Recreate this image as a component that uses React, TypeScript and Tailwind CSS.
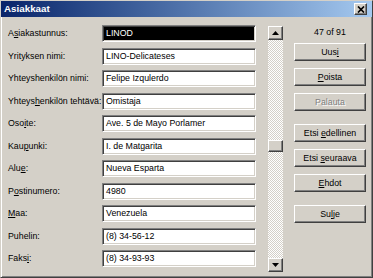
const FONT = "font-['Liberation_Sans',Arial,sans-serif]";

const fields = [
  { label: "Asiakastunnus:", u: 1, value: "LINOD", selected: true },
  { label: "Yrityksen nimi:", u: -1, value: "LINO-Delicateses" },
  { label: "Yhteyshenkilön nimi:", u: -1, value: "Felipe Izqulerdo" },
  { label: "Yhteyshenkilön tehtävä:", u: 6, value: "Omistaja" },
  { label: "Osoite:", u: 3, value: "Ave. 5 de Mayo Porlamer" },
  { label: "Kaupunki:", u: 3, value: "I. de Matgarita" },
  { label: "Alue:", u: 3, value: "Nueva Esparta" },
  { label: "Postinumero:", u: 1, value: "4980" },
  { label: "Maa:", u: 0, value: "Venezuela" },
  { label: "Puhelin:", u: -1, value: "(8) 34-56-12" },
  { label: "Faksi:", u: 4, value: "(8) 34-93-93" },
];

const buttons = [
  { text: "Uusi", u: 3, gap: "mt-[5px]" },
  { text: "Poista", u: 0, gap: "mt-[7px]" },
  { text: "Palauta", u: -1, gap: "mt-[7px]", disabled: true },
  { text: "Etsi edellinen", u: 5, gap: "mt-[13px]" },
  { text: "Etsi seuraava", u: 5, gap: "mt-[7px]" },
  { text: "Ehdot", u: 0, gap: "mt-[7px]" },
  { text: "Sulje", u: 2, gap: "mt-[13px]" },
];

// underline the access-key letter
function Acc({ text, u }: { text: string; u: number }) {
  if (u < 0) return <span>{text}</span>;
  return (
    <span className="whitespace-pre">
      {text.slice(0, u)}
      <span className="underline underline-offset-1">{text[u]}</span>
      {text.slice(u + 1)}
    </span>
  );
}

function Arrow({ up }: { up?: boolean }) {
  return (
    <svg width="7" height="4" viewBox="0 0 7 4">
      <path d={up ? "M0 4 L3.5 0 L7 4 Z" : "M0 0 L7 0 L3.5 4 Z"} fill="#000" />
    </svg>
  );
}

const raised =
  "border border-t-white border-l-white border-r-[#404040] border-b-[#404040] shadow-[inset_-1px_-1px_0_#808080] bg-[#d4d0c8]";

export default function App() {
  return (
    <div
      className={`${FONT} w-[373px] h-[278px] bg-[#d4d0c8] border border-t-[#d4d0c8] border-l-[#d4d0c8] border-r-[#404040] border-b-[#404040] shadow-[inset_1px_1px_0_#fff,inset_-1px_-1px_0_#808080] overflow-hidden text-black`}
    >
      {/* title bar */}
      <div className="h-[16px] flex items-center justify-between bg-gradient-to-r from-[#0a246a] to-[#a6caf0]">
        <span className="pl-[3px] text-[9.8px] font-bold text-white leading-none">Asiakkaat</span>
        <div className={`${raised} mr-[5px] w-[13px] h-[12px] flex items-center justify-center`}>
          <svg width="8" height="7" viewBox="0 0 8 7">
            <path d="M1 0.5 L7 6.5 M7 0.5 L1 6.5" stroke="#000" strokeWidth="1.7" />
          </svg>
        </div>
      </div>

      <div className="flex items-start text-[8.8px]">
        {/* form fields */}
        <div className="pl-[7px] pt-[8px] flex flex-col gap-[5.5px]">
          {fields.map((f) => (
            <div key={f.label} className="flex items-center h-[17px]">
              <div className="w-[94px] whitespace-nowrap leading-none">
                <Acc text={f.label} u={f.u} />
              </div>
              <div
                className={`w-[154px] h-[17px] flex items-center pl-[1px] border border-t-[#808080] border-l-[#808080] border-r-white border-b-white shadow-[inset_1px_1px_0_#404040,inset_-1px_-1px_0_#d4d0c8] whitespace-nowrap leading-none ${
                  f.selected ? "bg-black text-white" : "bg-white"
                }`}
              >
                <span className="pl-[2px]">{f.value}</span>
              </div>
            </div>
          ))}
        </div>

        {/* scrollbar */}
        <div className="ml-[12px] mt-[9px] w-[15px] h-[246px] flex flex-col">
          <div className={`${raised} h-[14px] flex items-center justify-center`}>
            <Arrow up />
          </div>
          <div className="flex-1 pt-[100px] bg-[repeating-conic-gradient(#ffffff_0%_25%,#d4d0c8_0%_50%)] bg-[length:2px_2px]">
            <div className={`${raised} h-[12px]`} />
          </div>
          <div className={`${raised} h-[14px] flex items-center justify-center`}>
            <Arrow />
          </div>
        </div>

        {/* buttons */}
        <div className="ml-[11px] pt-[9px] w-[72px] flex flex-col">
          <div className="h-[12px] leading-[12px] text-center">47 of 91</div>
          {buttons.map((b) => (
            <div
              key={b.text}
              className={`${raised} ${b.gap} h-[18px] flex items-center justify-center leading-none whitespace-nowrap ${
                b.disabled ? "text-[#808080] [text-shadow:1px_1px_0_#fff]" : ""
              }`}
            >
              <Acc text={b.text} u={b.u} />
            </div>
          ))}
        </div>
      </div>
    </div>
  );
}
